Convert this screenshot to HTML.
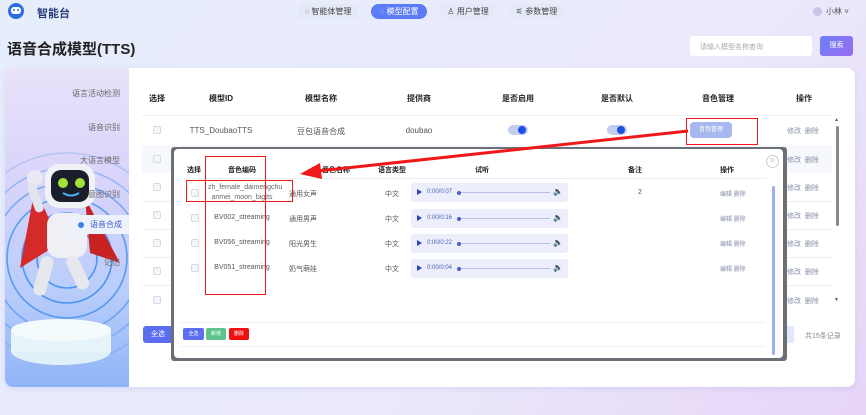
<!DOCTYPE html>
<html><head><meta charset="utf-8"><style>
*{box-sizing:border-box;margin:0;padding:0}
body{width:866px;height:415px;overflow:hidden;font-family:"Liberation Sans","Noto Sans CJK SC",sans-serif;background:linear-gradient(135deg,#e6edfb 0%,#ebeafc 60%,#e6d4f7 100%);position:relative;color:#333}
.a{position:absolute}
.t{position:absolute;font-size:8px;color:#555;white-space:nowrap;transform:translateX(-50%)}
.h{font-weight:bold;color:#222}
.pill{position:absolute;top:4px;height:15px;border-radius:8px;background:#e4e9f6;font-size:8px;color:#444;line-height:15px;text-align:center}
.cb{position:absolute;width:8px;height:8px;border:1px solid #d6dae3;border-radius:2px;background:#f4f6fa}
.sw{position:absolute;width:20px;height:10px;border-radius:5px;background:#c3cdf0}
.sw i{position:absolute;right:2px;top:1px;width:8px;height:8px;border-radius:50%;background:#1d4fe0}
.ops{position:absolute;font-size:7px;color:#8890a8}
.aud{position:absolute;left:411px;width:157px;height:19px;background:#eceffb;border-radius:3px}
.aud b{position:absolute;left:6px;top:6px;border-left:5px solid #2b43b8;border-top:3.5px solid transparent;border-bottom:3.5px solid transparent}
.aud span{position:absolute;left:16px;top:6px;font-size:6px;line-height:7px;color:#4a5fb8}
.aud em{position:absolute;left:46px;top:9px;width:93px;height:1px;background:#b8bfe0}
.aud em:before{content:"";position:absolute;left:0;top:-1.5px;width:4px;height:4px;border-radius:50%;background:#4a62d0}
.aud u{position:absolute;right:5px;top:4px;font-size:8px;color:#6478d0;text-decoration:none}
.red{position:absolute;border:1.5px solid #f01818}
</style></head><body>
<!-- header -->
<div class="a" style="left:8px;top:3px;width:16px;height:16px;border-radius:50%;background:#2f6be0"></div>
<div class="a" style="left:11px;top:7px;width:10px;height:7px;border-radius:3px;background:#fff"></div>
<div class="a" style="left:13px;top:9px;width:2px;height:2px;background:#2f6be0;border-radius:50%"></div>
<div class="a" style="left:17px;top:9px;width:2px;height:2px;background:#2f6be0;border-radius:50%"></div>
<div class="a" style="left:37px;top:5px;font-size:11px;font-weight:bold;color:#2a3a7a">智能台</div>
<div class="pill" style="left:297px;width:62px">◌ 智能体管理</div>
<div class="pill" style="left:371px;width:56px;background:#5b7cf5;color:#fff">◌ 模型配置</div>
<div class="pill" style="left:441px;width:54px">♙ 用户管理</div>
<div class="pill" style="left:509px;width:55px">⚟ 参数管理</div>
<div class="a" style="left:813px;top:7px;width:9px;height:9px;border-radius:50%;background:#c9c4e8"></div>
<div class="a" style="left:826px;top:6px;font-size:8px;color:#555">小林 ˅</div>
<div class="a" style="left:7px;top:38px;font-size:15px;font-weight:bold;color:#222">语音合成模型(TTS)</div>
<div class="a" style="left:690px;top:36px;width:122px;height:20px;background:#fff;border-radius:3px;font-size:7px;color:#aaa;padding:6px 0 0 10px">请输入模型名称查询</div>
<div class="a" style="left:820px;top:36px;width:33px;height:20px;border-radius:3px;background:linear-gradient(135deg,#6b7ff5,#9a6cf0);color:#fff;font-size:7px;text-align:center;line-height:20px">搜索</div>
<!-- card -->
<div class="a" style="left:5px;top:68px;width:850px;height:319px;background:#fff;border-radius:8px;box-shadow:0 2px 6px rgba(120,120,200,.15);overflow:hidden">
 <div class="a" style="left:0;top:0;width:124px;height:319px;background:linear-gradient(180deg,#e8e2fa 0%,#d9d4fa 35%,#b9cdfa 70%,#8fb4f8 100%)">
  <svg class="a" style="left:0;top:0" width="124" height="319">
   <g fill="none" stroke="#3d8ef0" stroke-width="1.6">
    <circle cx="62" cy="190" r="30" opacity=".9"/><circle cx="62" cy="190" r="45" opacity=".9"/><circle cx="62" cy="190" r="60" opacity=".8"/><circle cx="62" cy="190" r="75" opacity=".6"/><circle cx="62" cy="190" r="90" opacity=".4"/><circle cx="62" cy="190" r="105" opacity=".25"/>
   </g>
   <ellipse cx="56" cy="283" rx="50" ry="14" fill="#dff0f8"/>
   <rect x="6" y="262" width="100" height="22" fill="#e6f4fa"/>
   <ellipse cx="56" cy="262" rx="50" ry="11" fill="#f4fbfd"/>
   <path d="M30 120 L15 200 L55 175 Z" fill="#d42a2a"/>
   <path d="M80 130 L115 195 L85 185 Z" fill="#c82222"/>
   <rect x="42" y="145" width="40" height="45" rx="12" fill="#eef0f5"/>
   <rect x="40" y="96" width="50" height="44" rx="14" fill="#f0f2f6"/>
   <rect x="46" y="102" width="38" height="32" rx="10" fill="#1a1d2a"/>
   <circle cx="58" cy="115" r="5" fill="#a4e03a"/><circle cx="75" cy="115" r="5" fill="#a4e03a"/>
   <path d="M58 125 Q66 130 74 125" stroke="#4ab0f0" stroke-width="2" fill="none"/>
   <circle cx="30" cy="110" r="8" fill="#eae8f2"/>
   <rect x="26" y="115" width="9" height="30" rx="4" fill="#e4e4ee" transform="rotate(-20 30 130)"/>
   <rect x="34" y="188" width="13" height="40" rx="6" fill="#e6e8ee" transform="rotate(15 40 200)"/>
   <rect x="64" y="188" width="13" height="35" rx="6" fill="#e6e8ee" transform="rotate(-25 70 200)"/>
  </svg>
  <div class="a" style="right:9px;top:20px;font-size:8px;color:#666">语言活动检测</div>
  <div class="a" style="right:9px;top:54px;font-size:8px;color:#666">语音识别</div>
  <div class="a" style="right:9px;top:87px;font-size:8px;color:#666">大语言模型</div>
  <div class="a" style="right:9px;top:121px;font-size:8px;color:#666">意图识别</div>
  <div class="a" style="left:65px;top:147px;width:59px;height:19px;background:#edf2fd;border-radius:4px 0 0 4px"></div>
  <div class="a" style="left:73px;top:154px;width:6px;height:6px;border-radius:50%;background:#3b82f0"></div>
  <div class="a" style="left:85px;top:151px;font-size:8px;color:#3b5bd0">语音合成</div>
  <div class="a" style="right:9px;top:189px;font-size:8px;color:#666">记忆</div>
 </div>
</div>
<!-- main table -->
<div class="t h" style="left:157px;top:93px">选择</div>
<div class="t h" style="left:221px;top:93px">模型ID</div>
<div class="t h" style="left:321px;top:93px">模型名称</div>
<div class="t h" style="left:419px;top:93px">提供商</div>
<div class="t h" style="left:518px;top:93px">是否启用</div>
<div class="t h" style="left:617px;top:93px">是否默认</div>
<div class="t h" style="left:718px;top:93px">音色管理</div>
<div class="t h" style="left:804px;top:93px">操作</div>
<div class="a" style="left:142px;top:115px;width:690px;height:1px;background:#eceef4"></div>
<div class="a" style="left:142px;top:145px;width:690px;height:28px;background:#f7f8fb"></div>
<div class="cb" style="left:153px;top:126px"></div>
<div class="t" style="left:221px;top:126px">TTS_DoubaoTTS</div>
<div class="t" style="left:321px;top:126px">豆包语音合成</div>
<div class="t" style="left:419px;top:126px">doubao</div>
<div class="sw" style="left:508px;top:125px"><i></i></div>
<div class="sw" style="left:607px;top:125px"><i></i></div>
<div class="a" style="left:690px;top:122px;width:42px;height:16px;border-radius:4px;background:#a7b8ee;color:#fff;font-size:6px;text-align:center;line-height:16px">音色管理</div>
<div class="ops" style="left:787px;top:126px">修改 &nbsp;删除</div>
<div class="ops" style="left:787px;top:155px">修改 &nbsp;删除</div>
<div class="ops" style="left:787px;top:183px">修改 &nbsp;删除</div>
<div class="ops" style="left:787px;top:211px">修改 &nbsp;删除</div>
<div class="ops" style="left:787px;top:239px">修改 &nbsp;删除</div>
<div class="ops" style="left:787px;top:267px">修改 &nbsp;删除</div>
<div class="ops" style="left:787px;top:296px">修改 &nbsp;删除</div>
<div class="cb" style="left:153px;top:155px"></div><div class="cb" style="left:153px;top:183px"></div><div class="cb" style="left:153px;top:211px"></div><div class="cb" style="left:153px;top:239px"></div><div class="cb" style="left:153px;top:267px"></div><div class="cb" style="left:153px;top:296px"></div>
<div class="a" style="left:142px;top:201px;width:690px;height:1px;background:#eceef4"></div>
<div class="a" style="left:142px;top:229px;width:690px;height:1px;background:#eceef4"></div>
<div class="a" style="left:142px;top:257px;width:690px;height:1px;background:#eceef4"></div>
<div class="a" style="left:142px;top:285px;width:690px;height:1px;background:#eceef4"></div>
<div class="a" style="left:836px;top:126px;width:3px;height:100px;background:#8a8a8a;border-radius:2px"></div>
<div class="a" style="left:834px;top:117px;font-size:5px;color:#555">▲</div>
<div class="a" style="left:834px;top:297px;font-size:5px;color:#555">▼</div>
<div class="a" style="left:143px;top:326px;width:30px;height:17px;border-radius:3px;background:#5b6ef0;color:#fff;font-size:7px;text-align:center;line-height:17px">全选</div>
<div class="a" style="left:780px;top:326px;width:14px;height:17px;background:#e0e8fb"></div>
<div class="a" style="left:805px;top:331px;font-size:7px;color:#888">共15条记录</div>
<!-- modal -->
<div class="a" style="left:171px;top:147px;width:616px;height:214px;background:#6b6f76;border-radius:3px"></div>
<div class="a" style="left:174px;top:149px;width:609px;height:209px;background:#fff;border-radius:4px"></div>
<div class="t h" style="left:194px;top:165px;font-size:7px">选择</div>
<div class="t h" style="left:242px;top:165px;font-size:7px">音色编码</div>
<div class="t h" style="left:336px;top:165px;font-size:7px">音色名称</div>
<div class="t h" style="left:392px;top:165px;font-size:7px">语言类型</div>
<div class="t h" style="left:482px;top:165px;font-size:7px">试听</div>
<div class="t h" style="left:635px;top:165px;font-size:7px">备注</div>
<div class="t h" style="left:727px;top:165px;font-size:7px">操作</div>
<div class="a" style="left:184px;top:178px;width:582px;height:1px;background:#eceef6"></div>
<div class="a" style="left:766px;top:155px;width:13px;height:13px;border:1px solid #ccc;border-radius:50%;color:#ccc;font-size:11px;line-height:11px;text-align:center">×</div>
<div class="cb" style="left:191px;top:189px"></div><div class="cb" style="left:191px;top:214px"></div><div class="cb" style="left:191px;top:239px"></div><div class="cb" style="left:191px;top:264px"></div>
<div class="a" style="left:208px;top:183px;font-size:7px;color:#666;line-height:9.5px;text-align:center;width:68px">zh_female_daimengchu<br>anmei_moon_bigtts</div>
<div class="t" style="left:242px;top:214px;font-size:7px">BV002_streaming</div>
<div class="t" style="left:242px;top:239px;font-size:7px">BV056_streaming</div>
<div class="t" style="left:242px;top:264px;font-size:7px">BV051_streaming</div>
<div class="t" style="left:303px;top:189px;font-size:7px">通用女声</div>
<div class="t" style="left:303px;top:214px;font-size:7px">通用男声</div>
<div class="t" style="left:303px;top:239px;font-size:7px">阳光男生</div>
<div class="t" style="left:303px;top:264px;font-size:7px">奶气萌娃</div>
<div class="t" style="left:392px;top:189px;font-size:7px">中文</div>
<div class="t" style="left:392px;top:214px;font-size:7px">中文</div>
<div class="t" style="left:392px;top:239px;font-size:7px">中文</div>
<div class="t" style="left:392px;top:264px;font-size:7px">中文</div>
<div class="aud" style="top:183px"><b></b><span>0:00/0:07</span><em></em><u>🔈</u></div>
<div class="aud" style="top:209px"><b></b><span>0:00/0:16</span><em></em><u>🔈</u></div>
<div class="aud" style="top:234px"><b></b><span>0:00/0:22</span><em></em><u>🔈</u></div>
<div class="aud" style="top:259px"><b></b><span>0:00/0:04</span><em></em><u>🔈</u></div>
<div class="t" style="left:640px;top:189px;font-size:7px">2</div>
<div class="ops" style="left:720px;top:189px;font-size:6px">编辑 删除</div>
<div class="ops" style="left:720px;top:214px;font-size:6px">编辑 删除</div>
<div class="ops" style="left:720px;top:239px;font-size:6px">编辑 删除</div>
<div class="ops" style="left:720px;top:264px;font-size:6px">编辑 删除</div>
<div class="a" style="left:181px;top:322px;width:584px;height:25px;border-top:1px solid #f0f0f4;border-bottom:1px solid #f0f0f4"></div>
<div class="a" style="left:183px;top:328px;width:21px;height:12px;background:#5b6ef0;border-radius:2px;color:#fff;font-size:5px;text-align:center;line-height:12px">全选</div>
<div class="a" style="left:206px;top:328px;width:20px;height:12px;background:#5cc48a;border-radius:2px;color:#fff;font-size:5px;text-align:center;line-height:12px">新增</div>
<div class="a" style="left:229px;top:328px;width:20px;height:12px;background:#f01010;border-radius:2px;color:#fff;font-size:5px;text-align:center;line-height:12px">删除</div>
<div class="a" style="left:772px;top:186px;width:3px;height:169px;background:#9aaef0;border-radius:2px"></div>
<!-- annotations -->
<div class="red" style="left:686px;top:118px;width:72px;height:27px"></div>
<div class="red" style="left:205px;top:156px;width:61px;height:139px"></div>
<div class="red" style="left:186px;top:180px;width:107px;height:22px"></div>
<svg class="a" style="left:0;top:0" width="866" height="415">
 <line x1="688" y1="131" x2="318" y2="171" stroke="#f01818" stroke-width="3"/>
 <polygon points="300,174 320,163 322,179" fill="#f01818"/>
</svg>
</body></html>
